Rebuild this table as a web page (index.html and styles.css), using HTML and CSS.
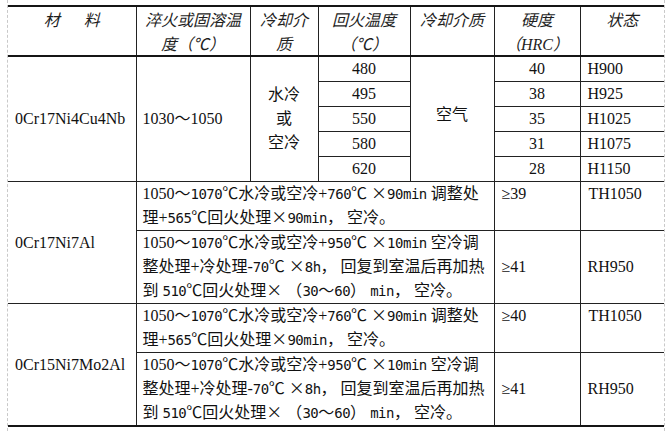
FILE: index.html
```html
<!DOCTYPE html>
<html lang="zh-CN">
<head>
<meta charset="utf-8">
<title>热处理规范</title>
<link rel="stylesheet" href="styles.css">
</head>
<body>
<div class="page">
<table class="spec">
<colgroup>
<col class="c1"><col class="c2"><col class="c3"><col class="c4"><col class="c5"><col class="c6"><col class="c7">
</colgroup>
<thead>
<tr>
<th class="hd">材&emsp;&ensp;料</th>
<th class="hd">淬火或固溶温<br>度（℃）</th>
<th class="hd">冷却介<br>质</th>
<th class="hd">回火温度<br>（℃）</th>
<th class="hd">冷却介质</th>
<th class="hd">硬度<br>（<span class="hl">HRC</span>）</th>
<th class="hd">状态</th>
</tr>
</thead>
<tbody>
<tr>
<td rowspan="5" class="cell mat">0Cr17Ni4Cu4Nb</td>
<td rowspan="5" class="cell lft">1030～1050</td>
<td rowspan="5" class="cell ctr">水冷<br>或<br>空冷</td>
<td class="cell ctr">480</td>
<td rowspan="5" class="cell ctr air">空气</td>
<td class="cell ctr">40</td>
<td class="cell st">H900</td>
</tr>
<tr>
<td class="cell ctr">495</td>
<td class="cell ctr">38</td>
<td class="cell st">H925</td>
</tr>
<tr>
<td class="cell ctr">550</td>
<td class="cell ctr">35</td>
<td class="cell st">H1025</td>
</tr>
<tr>
<td class="cell ctr">580</td>
<td class="cell ctr">31</td>
<td class="cell st">H1075</td>
</tr>
<tr>
<td class="cell ctr">620</td>
<td class="cell ctr">28</td>
<td class="cell st">H1150</td>
</tr>
<tr>
<td rowspan="2" class="cell mat">0Cr17Ni7Al</td>
<td colspan="4" class="cell proc">1050～<span class="ss">1070</span><span class="x">℃</span>水冷或空冷+<span class="ss">760</span><span class="x">℃</span> <span class="x">×</span><span class="ss">90min</span> 调整处<br>理+<span class="ss">565</span><span class="x">℃</span>回火处理<span class="x">×</span><span class="ss">90min</span>， 空冷。</td>
<td class="cell hard top">≥39</td>
<td class="cell st top ts">TH1050</td>
</tr>
<tr>
<td colspan="4" class="cell proc">1050～<span class="ss">1070</span><span class="x">℃</span>水冷或空冷+<span class="ss">950</span><span class="x">℃</span> <span class="x">×</span><span class="ss">10min</span> 空冷调<br>整处理+冷处理-<span class="ss">70</span><span class="x">℃</span> <span class="x">×</span><span class="ss">8h</span>， 回复到室温后再加热<br>到 <span class="ss">510</span><span class="x">℃</span>回火处理<span class="x">×</span> （<span class="ss">30</span>～<span class="ss">60</span>） <span class="ss">min</span>， 空冷。</td>
<td class="cell hard">≥41</td>
<td class="cell st">RH950</td>
</tr>
<tr>
<td rowspan="2" class="cell mat">0Cr15Ni7Mo2Al</td>
<td colspan="4" class="cell proc">1050～<span class="ss">1070</span><span class="x">℃</span>水冷或空冷+<span class="ss">760</span><span class="x">℃</span> <span class="x">×</span><span class="ss">90min</span> 调整处<br>理+<span class="ss">565</span><span class="x">℃</span>回火处理<span class="x">×</span><span class="ss">90min</span>， 空冷。</td>
<td class="cell hard top">≥40</td>
<td class="cell st top ts">TH1050</td>
</tr>
<tr>
<td colspan="4" class="cell proc">1050～<span class="ss">1070</span><span class="x">℃</span>水冷或空冷+<span class="ss">950</span><span class="x">℃</span> <span class="x">×</span><span class="ss">10min</span> 空冷调<br>整处理+冷处理-<span class="ss">70</span><span class="x">℃</span> <span class="x">×</span><span class="ss">8h</span>， 回复到室温后再加热<br>到 <span class="ss">510</span><span class="x">℃</span>回火处理<span class="x">×</span> （<span class="ss">30</span>～<span class="ss">60</span>） <span class="ss">min</span>， 空冷。</td>
<td class="cell hard">≥41</td>
<td class="cell st">RH950</td>
</tr>
</tbody>
</table>
</div>
</body>
</html>
```
FILE: styles.css
```css
html, body {
  margin: 0;
  padding: 0;
  background: #ffffff;
}

body {
  font-family: "Liberation Serif", "Noto Sans CJK SC", serif;
  color: #111111;
}

.page {
  width: 656px;
  margin-left: 7px;
  padding: 5px 0 4px;
  border-left: 1px dashed #c9c9c9;
  border-right: 1px dashed #c9c9c9;
}

.spec {
  width: 656px;
  table-layout: fixed;
  border-collapse: collapse;
  border-top: 2px solid #151515;
  border-bottom: 2px solid #151515;
  border-left: hidden;
  border-right: hidden;
  font-size: 16px;
  line-height: 24px;
}

.c1 { width: 128px; }
.c2 { width: 114px; }
.c3 { width: 68px; }
.c4 { width: 92px; }
.c5 { width: 84px; }
.c6 { width: 86px; }
.c7 { width: 84px; }

.hd {
  height: 47px;
  border: 1px solid #222222;
  border-bottom: 2px solid #151515;
  padding: 0 1px;
  vertical-align: top;
  text-align: center;
  font-family: "Noto Sans CJK SC", "Liberation Serif", sans-serif;
  font-weight: normal;
  font-style: italic;
  font-size: 16px;
  line-height: 24px;
  color: #1e1e1e;
}

.hl {
  font-family: "Liberation Serif", serif;
  font-style: italic;
  line-height: 1;
}

.cell {
  border: 1px solid #222222;
  padding: 0 6px;
  vertical-align: middle;
  white-space: nowrap;
}

.mat {
  text-align: left;
  padding-left: 7px;
}

.lft {
  text-align: left;
}

.ctr {
  text-align: center;
  padding: 0;
}

.air {
  padding-bottom: 8px;
}

.st {
  text-align: left;
  padding-left: 7px;
}

.ts {
  padding-left: 8px;
}

.hard {
  text-align: left;
  padding-left: 7px;
}

.top {
  vertical-align: top;
}

.proc {
  text-align: left;
  padding-left: 6px;
}

.ss {
  font-family: "DejaVu Sans Mono", monospace;
  font-size: 14px;
  line-height: 1;
  letter-spacing: -0.5px;
}

.x {
  font-family: "Noto Sans CJK SC", sans-serif;
  line-height: 1;
}
```
